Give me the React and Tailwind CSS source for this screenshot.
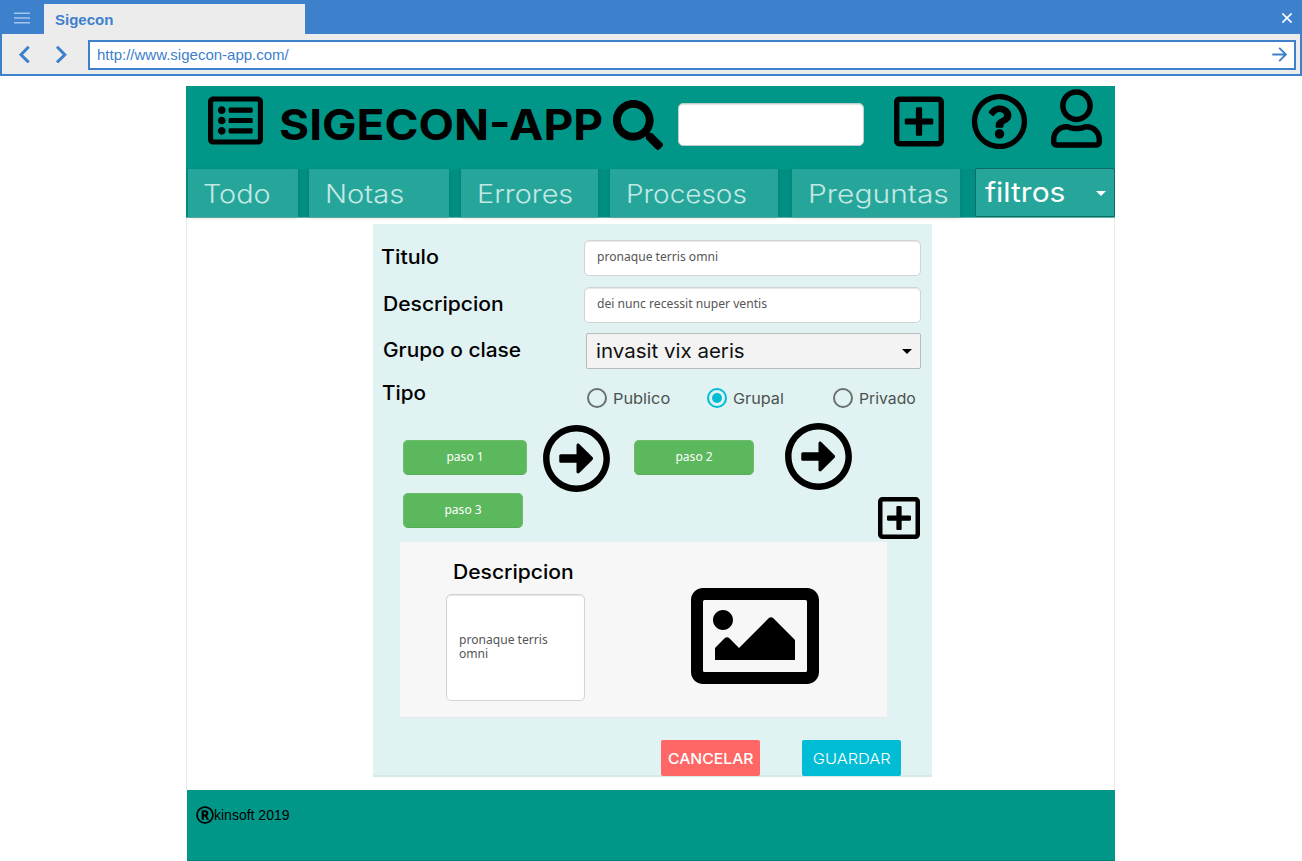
import { FaRegListAlt, FaSearch, FaRegPlusSquare, FaRegQuestionCircle, FaRegUser, FaRegArrowAltCircleRight, FaRegImage, FaRegRegistered } from "react-icons/fa";

const tabs = [
  { name: "Todo", box: "w-[110px] mr-[11px] pl-[15px]", text: "scale-x-[1.13]" },
  { name: "Notas", box: "w-[140px] mr-[12px] pl-[16px]", text: "scale-x-[1.14]" },
  { name: "Errores", box: "w-[137px] mr-[12px] pl-[16px]", text: "scale-x-[1.13]" },
  { name: "Procesos", box: "w-[168px] mr-[14px] pl-[16px]", text: "scale-x-[1.095]" },
  { name: "Preguntas", box: "w-[168px] mr-[15px] pl-[16px]", text: "scale-x-[1.175]" },
];

const field = "rounded-[5px] border border-[#d2d4d4] bg-white shadow-[inset_0_1px_1px_rgba(0,0,0,0.1)]";
const small = "font-['Noto_Sans','Open_Sans',sans-serif] text-[13px]";
const label = "text-[19.5px] leading-6 font-medium text-black whitespace-nowrap";

function Wide({ children, by }) {
  return <span className={`inline-block origin-left whitespace-nowrap ${by}`}>{children}</span>;
}

function Browser() {
  return (
    <div className="flex h-[76px] flex-col bg-[#3d80cc] font-['Liberation_Sans',Arial,sans-serif] text-[#3d80cc]">
      <div className="flex h-[34px]">
        <svg className="ml-[14px] mt-3 h-3 w-4 shrink-0" viewBox="0 0 16 12" stroke="#a5c5ea" strokeWidth="1.6">
          <path d="M0 1.2H16M0 6H16M0 10.8H16" />
        </svg>
        <div className="ml-[14px] mt-1 h-[30px] w-[261px] bg-[#ececec] pl-[11px] text-[15px] leading-[31px] font-bold">Sigecon</div>
        <svg className="ml-auto mr-[10px] mt-[13px] h-[10px] w-[10px]" viewBox="0 0 10 10" stroke="#fff" strokeWidth="1.6">
          <path d="M.4 .4L9.6 9.6M9.6 .4L.4 9.6" />
        </svg>
      </div>
      <div className="mx-[2px] flex h-10 items-center bg-[#ececec] pl-[16px] pr-[4px]">
        <svg className="h-[18px] w-3" viewBox="0 0 12 18" fill="none" stroke="#3d80cc" strokeWidth="3">
          <path d="M10.7 1.8L3 9.7L10.7 17.4" />
        </svg>
        <svg className="ml-[25px] h-[18px] w-3" viewBox="0 0 12 18" fill="none" stroke="#3d80cc" strokeWidth="3">
          <path d="M2 1.8L9.8 9.7L2 17.4" />
        </svg>
        <div className="ml-[21px] mt-[2px] flex h-[30px] flex-1 items-center justify-between border-2 border-[#3d80cc] bg-white pl-[7px] pr-[7px] text-[15px]">
          <span>http://www.sigecon-app.com/</span>
          <svg className="h-4 w-[15px]" viewBox="0 0 15 16" fill="none" stroke="#3d80cc" strokeWidth="1.9">
            <path d="M.3 7.5H13.8M7.2 .8L13.9 7.5L7.2 14.2" />
          </svg>
        </div>
      </div>
    </div>
  );
}

function Header() {
  return (
    <header className="flex h-[83px] items-start bg-[#009688] text-black">
      <FaRegListAlt className="ml-[22px] mt-[7px] h-[55px] w-[55px] shrink-0" />
      <h1 className="ml-[16px] mt-[13px] w-[334px] shrink-0 text-[43px] leading-[50px] font-bold">
        <Wide by="scale-x-[1.07]">SIGECON-APP</Wide>
      </h1>
      <FaSearch className="mt-[14px] h-[50px] w-[50px] shrink-0" />
      <div className="ml-[15px] mt-[17px] h-[43px] w-[186px] shrink-0 rounded-[5px] border border-[#bccfcd] bg-white shadow-[inset_0_1px_1px_rgba(0,0,0,0.12)]" />
      <FaRegPlusSquare className="ml-[30px] mt-[7px] h-[57px] w-[50px] shrink-0" />
      <FaRegQuestionCircle className="ml-[27px] mt-[7px] h-[57px] w-[57px] shrink-0" />
      <FaRegUser className="ml-[23px] mt-[3px] h-[59px] w-[51px] shrink-0" />
    </header>
  );
}

function Tabs() {
  return (
    <nav className="flex h-[49px] border-b border-[#60b3aa] bg-[#008f82] pl-[2px]">
      {tabs.map((t) => (
        <div key={t.name} className={`h-12 shrink-0 bg-[#26a69a] text-[25.5px] leading-[50px] font-light text-[#c3e8e4] shadow-[0_1px_4px_rgba(0,0,0,0.12)] ${t.box}`}>
          <Wide by={t.text}>{t.name}</Wide>
        </div>
      ))}
      <div className="-mt-px flex h-[49px] flex-1 items-center justify-between rounded-[2px] border border-[#0c6b62] bg-[#26a69a] pl-[9px] pr-[8px] text-[27px] text-white">
        <span className="pt-px"><Wide by="scale-x-[1.11]">filtros</Wide></span>
        <svg className="mt-[2px] h-[5px] w-[10px]" viewBox="0 0 10 5"><path d="M0 0H10L5 5Z" fill="#fff" /></svg>
      </div>
    </nav>
  );
}

function Radio({ name, on, box, by }) {
  return (
    <label className={`flex shrink-0 items-center ${box}`}>
      <span className={`flex h-5 w-5 items-center justify-center rounded-full border-2 ${on ? "border-[#00bcd4]" : "border-[#697171]"}`}>
        {on && <span className="h-[10px] w-[10px] rounded-full bg-[#00bcd4]" />}
      </span>
      <span className="ml-[6px] pt-[2px] text-[15px] leading-5 text-[#4b5252]"><Wide by={by}>{name}</Wide></span>
    </label>
  );
}

function Step({ name, box }) {
  return (
    <div className={`h-[35px] shrink-0 rounded-[5px] border border-[#6cbc6c] border-b-[#56ab56] bg-[#5cb85c] text-center leading-[31px] text-white ${small} ${box}`}>
      <span className="inline-block scale-x-[0.93]">{name}</span>
    </div>
  );
}

function Form() {
  return (
    <section className="ml-[186px] flex h-[553px] w-[559px] flex-col border-b-2 border-[#d6e9e7] bg-[#e0f2f1] *:shrink-0">
      <div className="mt-4 flex h-[36px] pl-[8px]">
        <div className={`w-[203px] pt-[5px] ${label}`}><Wide by="scale-x-[1.1]">Titulo</Wide></div>
        <div className={`w-[337px] pl-3 leading-[31px] text-[#555] ${field} ${small}`}><Wide by="scale-x-[0.93]">pronaque terris omni</Wide></div>
      </div>
      <div className="mt-[11px] flex h-[36px] pl-[10px]">
        <div className={`w-[201px] pt-[5px] ${label}`}><Wide by="scale-x-[1.08]">Descripcion</Wide></div>
        <div className={`w-[337px] pl-3 leading-[31px] text-[#555] ${field} ${small}`}><Wide by="scale-x-[0.934]">dei nunc recessit nuper ventis</Wide></div>
      </div>
      <div className="mt-[10px] flex h-[36px] pl-[10px]">
        <div className={`w-[203px] pt-[5px] ${label}`}><Wide by="scale-x-[1.07]">Grupo o clase</Wide></div>
        <div className="flex w-[335px] items-center justify-between rounded-[2px] border border-[#b9baba] bg-[#f3f3f3] pl-[9px] pr-[8px] text-[20px] text-[#111]">
          <Wide by="scale-x-[1.025]">invasit vix aeris</Wide>
          <svg className="mt-px h-[5px] w-[10px]" viewBox="0 0 10 5"><path d="M0 0H10L5 5Z" /></svg>
        </div>
      </div>
      <div className="mt-[12px] flex h-[34px] pl-[9px]">
        <div className={`w-[205px] ${label}`}><Wide by="scale-x-[1.06]">Tipo</Wide></div>
        <Radio name="Publico" box="w-[120px]" by="scale-x-[1.09]" />
        <Radio name="Grupal" on box="w-[126px]" by="scale-x-[1.08]" />
        <Radio name="Privado" box="w-[90px]" by="scale-x-[1.05]" />
      </div>
      <div className="mt-[9px] flex h-[69px] pl-[30px]">
        <Step name="paso 1" box="mt-[16px] w-[124px]" />
        <FaRegArrowAltCircleRight className="ml-[15px] h-[69px] w-[69px] shrink-0" />
        <Step name="paso 2" box="ml-[23px] mt-[16px] w-[120px]" />
        <FaRegArrowAltCircleRight className="-mt-[2px] ml-[30px] h-[69px] w-[69px] shrink-0" />
      </div>
      <div className="flex h-[49px] items-start pl-[30px]">
        <Step name="paso 3" box="w-[120px]" />
        <FaRegPlusSquare className="ml-[355px] mt-px h-12 w-[42px] shrink-0" />
      </div>
      <div className="ml-[27px] flex h-[176px] w-[487px] border-b border-[#e2e8e8] bg-[#f7f7f7]">
        <div className="ml-[46px] w-[139px] shrink-0 pt-[18px]">
          <div className={`ml-[7px] ${label}`}><Wide by="scale-x-[1.08]">Descripcion</Wide></div>
          <div className={`mt-[10px] h-[107px] pl-3 pt-[37px] leading-[14px] text-[#555] ${field} ${small}`}>
            <Wide by="scale-x-[0.93]">pronaque terris<br />omni</Wide>
          </div>
        </div>
        <FaRegImage className="ml-[106px] mt-[30px] h-32 w-32 shrink-0" />
      </div>
      <div className="mt-[22px] flex pl-[288px] text-[15px] leading-[37px] text-white">
        <div className="h-9 w-[99px] rounded-[2px] bg-[#ff6666] text-center font-medium"><span className="inline-block scale-x-[1.05]">CANCELAR</span></div>
        <div className="ml-[42px] h-9 w-[99px] rounded-[2px] bg-[#00bcd4] text-center font-light"><span className="inline-block scale-x-[1.09]">GUARDAR</span></div>
      </div>
    </section>
  );
}

export default function App() {
  return (
    <div className="h-[861px] w-[1302px] overflow-hidden bg-white font-[Inter,Lato,sans-serif]">
      <Browser />
      <main className="ml-[186px] mt-[10px] w-[929px]">
        <Header />
        <Tabs />
        <div className="h-[572px] border-x border-[#e9e9e9] pt-[6px]">
          <Form />
        </div>
        <footer className="ml-px flex h-[71px] items-start border-b border-[#008175] bg-[#009688] pl-[9px] font-['Liberation_Sans',Arial,sans-serif] text-[14px] text-black">
          <FaRegRegistered className="mt-4 h-[18px] w-[18px]" />
          <span className="mt-[15px] leading-5">kinsoft 2019</span>
        </footer>
      </main>
    </div>
  );
}
